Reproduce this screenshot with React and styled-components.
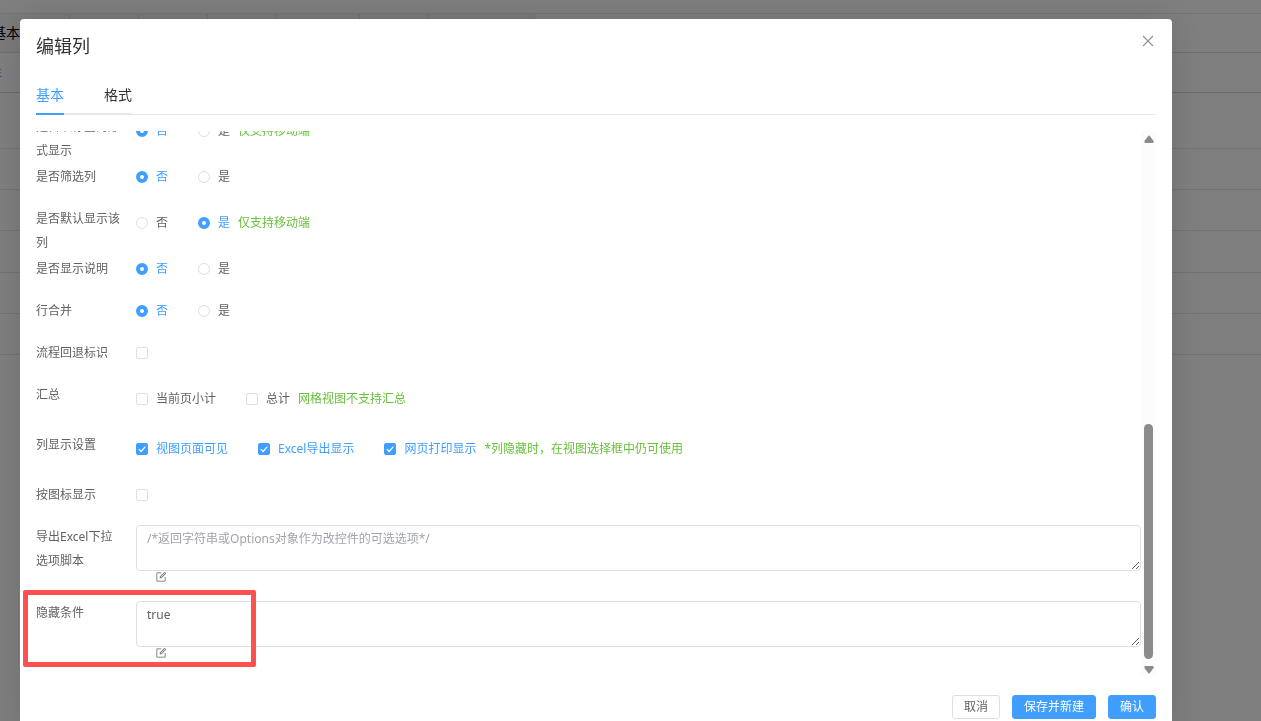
import React from "react";
import styled, { createGlobalStyle, css } from "styled-components";

const pageColumns = [78, 69, 69, 69, 83, 69, 106];
const pageRows = [40, 56, 41, 41, 42, 41, 41];

const App = () => {
  return (
    <>
      <GlobalStyle />
      <Page aria-hidden='true'>
        <PageBar />
        <PageHead>
          {pageColumns.map((width, index) => (
            <PageHeadCell key={index} $width={width}>
              {index === 0 ? "基本" : null}
            </PageHeadCell>
          ))}
        </PageHead>
        {pageRows.map((height, index) => (
          <PageRow key={index} $height={height} $strong={index === 0}>
            {index === 0 ? <PageLink>主</PageLink> : null}
          </PageRow>
        ))}
      </Page>
      <Overlay>
        <Dialog role='dialog' aria-labelledby='dialog-title'>
          <Header>
            <Title id='dialog-title'>编辑列</Title>
            <CloseButton type='button' aria-label='关闭'>
              <svg width='12' height='12' viewBox='0 0 12 12'>
                <path
                  d='M1 1L11 11M11 1L1 11'
                  stroke='#909399'
                  strokeWidth='1.2'
                  fill='none'
                />
              </svg>
            </CloseButton>
          </Header>
          <Tabs role='tablist'>
            <TabList>
              <Tab type='button' role='tab' aria-selected='true' $active>
                基本
              </Tab>
              <Tab type='button' role='tab' aria-selected='false'>
                格式
              </Tab>
            </TabList>
          </Tabs>
          <Body>
            <Form>
              <RadioRow
                label='是否以标签的形式显示'
                name='tag'
                value='否'
                hint='仅支持移动端'
              />
              <RadioRow label='是否筛选列' name='filter' value='否' />
              <RadioRow
                label='是否默认显示该列'
                name='visible'
                value='是'
                hint='仅支持移动端'
              />
              <RadioRow label='是否显示说明' name='description' value='否' />
              <RadioRow label='行合并' name='merge' value='否' />
              <CheckRow label='流程回退标识' options={[{ text: "" }]} />
              <CheckRow
                label='汇总'
                options={[{ text: "当前页小计" }, { text: "总计" }]}
                hint='网格视图不支持汇总'
              />
              <CheckRow
                label='列显示设置'
                options={[
                  { text: "视图页面可见", checked: true },
                  { text: "Excel导出显示", checked: true },
                  { text: "网页打印显示", checked: true },
                ]}
                hint='*列隐藏时，在视图选择框中仍可使用'
              />
              <CheckRow label='按图标显示' options={[{ text: "" }]} />
              <ScriptRow
                id='export-script'
                label='导出Excel下拉选项脚本'
                placeholder='/*返回字符串或Options对象作为改控件的可选选项*/'
              />
              <ScriptRow
                id='hide-condition'
                label='隐藏条件'
                value='true'
                marked
              />
            </Form>
            <Scrollbar aria-hidden='true'>
              <Arrow viewBox='0 0 10 8'>
                <path d='M4 1.2Q5 0 6 1.2L9.6 6Q10 8 8.6 8H1.4Q0 8 .4 6Z' />
              </Arrow>
              <Track>
                <Thumb />
              </Track>
              <Arrow viewBox='0 0 10 8'>
                <path d='M4 6.8Q5 8 6 6.8L9.6 2Q10 0 8.6 0H1.4Q0 0 .4 2Z' />
              </Arrow>
            </Scrollbar>
          </Body>
          <Footer>
            <Button type='button'>取消</Button>
            <Button type='button' $primary>
              保存并新建
            </Button>
            <Button type='button' $primary>
              确认
            </Button>
          </Footer>
        </Dialog>
      </Overlay>
    </>
  );
};

const RadioRow = ({ label, name, value, hint }) => (
  <Row role='radiogroup' aria-label={label}>
    <Label as='span'>{label}</Label>
    <Controls $tall={Boolean(hint)}>
      <Options>
        {["否", "是"].map((text) => (
          <Option key={text}>
            <Radio type='radio' name={name} defaultChecked={text === value} />
            <span>{text}</span>
          </Option>
        ))}
      </Options>
      {hint ? <Hint>{hint}</Hint> : null}
    </Controls>
  </Row>
);

const CheckRow = ({ label, options, hint }) => (
  <Row role='group' aria-label={label}>
    <Label as='span'>{label}</Label>
    <Controls $tall={Boolean(hint)}>
      <Options>
        {options.map(({ text, checked }) => (
          <Option key={text}>
            <CheckHolder>
              <Checkbox
                type='checkbox'
                defaultChecked={checked}
                aria-label={text || label}
              />
              <Tick viewBox='0 0 12 12'>
                <path d='M2.8 6.2L5.1 8.5L9.4 3.6' />
              </Tick>
            </CheckHolder>
            {text ? <span>{text}</span> : null}
          </Option>
        ))}
      </Options>
      {hint ? <Hint>{hint}</Hint> : null}
    </Controls>
  </Row>
);

const ScriptRow = ({ id, label, value, placeholder, marked }) => (
  <Row>
    <Label htmlFor={id}>{label}</Label>
    <ScriptField>
      <TextArea id={id} defaultValue={value} placeholder={placeholder} />
      <EditButton type='button' aria-label='编辑'>
        <svg width='12' height='12' viewBox='0 0 1024 1024' fill='#606266'>
          <path d='M832 512a32 32 0 1 1 64 0v352a32 32 0 0 1-32 32H160a32 32 0 0 1-32-32V160a32 32 0 0 1 32-32h352a32 32 0 0 1 0 64H192v640h640V512z' />
          <path d='m469.952 554.24 52.8-7.552L847.104 222.4a32 32 0 1 0-45.248-45.248L477.44 501.44l-7.552 52.8zm422.4-422.4a96 96 0 0 1 0 135.808l-331.84 331.84a32 32 0 0 1-18.112 9.088L436.8 623.68a32 32 0 0 1-36.224-36.224l15.104-105.6a32 32 0 0 1 9.024-18.112l331.904-331.84a96 96 0 0 1 135.744 0z' />
        </svg>
      </EditButton>
    </ScriptField>
    {marked ? <Marker aria-hidden='true' /> : null}
  </Row>
);

export default App;

const GlobalStyle = createGlobalStyle`
  * {
    box-sizing: border-box;
  }

  body {
    margin: 0;
    overflow: hidden;
    background: #fff;
    color: #606266;
    font-family: "Noto Sans", "Noto Sans CJK SC", sans-serif;
    font-size: 12px;
  }

  button, input, textarea {
    margin: 0;
    font-family: inherit;
  }
`;

/* the table behind is scrolled a little to the right */
const Page = styled.div`
  min-height: 100vh;
  margin-left: -8px;
`;

const PageBar = styled.div`
  height: 14px;
  border-bottom: 1px solid #e8e8ea;
`;

const PageHead = styled.div`
  display: flex;
  height: 39px;
  border-bottom: 1px solid #e0e0ea;
`;

const PageHeadCell = styled.div`
  flex: 0 0 ${({ $width }) => $width}px;
  border-right: 1px solid #e0e0e4;
  background: #f6f6f8;
  color: #000;
  font-size: 14px;
  line-height: 38px;
`;

const PageRow = styled.div`
  height: ${({ $height }) => $height}px;
  border-bottom: 1px solid ${({ $strong }) => ($strong ? "#d4d4d8" : "#e6e6ee")};
`;

const PageLink = styled.span`
  color: #409eff;
  font-size: 10px;
  line-height: 38px;
`;

const Overlay = styled.div`
  position: fixed;
  inset: 0;
  overflow: hidden;
  padding: 19px 89px 0 20px;
  background: rgba(0, 0, 0, 0.5);
`;

const Dialog = styled.div`
  padding: 16px 16px 20px;
  border-radius: 4px;
  background: #fff;
  box-shadow: 0 0 36px rgba(0, 0, 0, 0.14);
`;

const Header = styled.div`
  display: flex;
  justify-content: space-between;
  align-items: flex-start;
  height: 40px;
`;

const Title = styled.h2`
  margin: 0;
  color: #303133;
  font-size: 18px;
  font-weight: 400;
  line-height: 22px;
`;

const CloseButton = styled.button`
  display: flex;
  padding: 0 2px;
  border: 0;
  background: none;
`;

const Tabs = styled.div`
  display: flex;
  box-shadow: inset 0 -1px #e4e7ed;
`;

const TabList = styled.div`
  display: flex;
  gap: 40px;
  box-shadow: inset 0 -2px #e4e7ed;
`;

const Tab = styled.button`
  height: 40px;
  padding: 2px 0 0;
  border: 0;
  border-bottom: 2px solid ${({ $active }) => ($active ? "#409eff" : "transparent")};
  background: none;
  color: ${({ $active }) => ($active ? "#409eff" : "#303133")};
  font-size: 14px;
  line-height: 36px;
`;

const Body = styled.div`
  display: flex;
  height: calc(100vh - 176px);
  margin: 16px 0 0 -16px;
`;

/* scrolled to the end, the first row is cut by the top edge */
const Form = styled.div`
  display: flex;
  flex: 1;
  flex-direction: column;
  justify-content: flex-end;
  padding-left: 16px;
  overflow: hidden;
`;

const Row = styled.div`
  position: relative;
  display: flex;
  flex-shrink: 0;
  align-items: flex-start;

  &:last-child {
    height: 75px;
  }
`;

const Label = styled.label`
  flex: 0 0 100px;
  height: 24px;
  padding-right: 12px;
  line-height: 24px;
`;

const Controls = styled.div`
  display: flex;
  align-items: center;
  gap: 8px;
  height: ${({ $tall }) => ($tall ? 32 : 24)}px;
  margin-bottom: 18px;
`;

const Options = styled.div`
  display: flex;
  gap: 30px;
`;

const Option = styled.label`
  display: flex;
  align-items: center;
  gap: 8px;
  line-height: 24px;

  &:has(input:checked) {
    color: #409eff;
  }
`;

const Hint = styled.span`
  color: #67c23a;
  line-height: 24px;
`;

const control = css`
  appearance: none;
  width: 12px;
  height: 12px;
  border: 1px solid #dcdfe6;
  background: #fff;
`;

const Radio = styled.input`
  ${control}
  border-radius: 50%;

  &:checked {
    border: 4px solid #409eff;
  }
`;

const CheckHolder = styled.span`
  display: grid;

  > * {
    grid-area: 1 / 1;
  }
`;

const Checkbox = styled.input`
  ${control}
  border-radius: 2px;

  &:checked {
    border-color: #409eff;
    background: #409eff;
  }
`;

const Tick = styled.svg`
  width: 12px;
  height: 12px;
  fill: none;
  stroke: #fff;
  stroke-width: 1.2;
  pointer-events: none;
`;

const ScriptField = styled.div`
  display: flex;
  flex: 1;
  flex-direction: column;
  height: 76px;
`;

const TextArea = styled.textarea`
  height: 46px;
  padding: 4px 10px;
  border: 1px solid #dcdfe6;
  border-radius: 4px;
  outline: none;
  background: #fff;
  color: #606266;
  font-size: 12px;
  line-height: 18px;
  resize: vertical;

  &::placeholder {
    color: #a0a4ac;
  }
`;

const EditButton = styled.button`
  display: flex;
  align-self: flex-start;
  margin-left: 19px;
  padding: 0;
  border: 0;
  background: none;
`;

const Marker = styled.div`
  position: absolute;
  top: -11px;
  left: -13px;
  width: 233px;
  height: 77px;
  border: 5px solid #ff5050;
  border-radius: 2px;
  pointer-events: none;
`;

const Scrollbar = styled.div`
  display: flex;
  flex: 0 0 15px;
  flex-direction: column;
  align-items: center;
  padding: 4px 0 2px;
  background: #fcfcfc;
`;

const Arrow = styled.svg`
  width: 10px;
  height: 8px;
  fill: #8b8b8b;
`;

const Track = styled.div`
  display: flex;
  flex: 1;
  align-items: flex-end;
  padding: 6px 0 7px;
`;

const Thumb = styled.div`
  width: 9px;
  height: 46%;
  border-radius: 5px;
  background: #8b8b8b;
`;

const Footer = styled.div`
  display: flex;
  justify-content: flex-end;
  gap: 12px;
  padding-top: 19px;
`;

const Button = styled.button`
  height: 24px;
  padding: 0 11px;
  border: 1px solid ${({ $primary }) => ($primary ? "#409eff" : "#dcdfe6")};
  border-radius: 3px;
  background: ${({ $primary }) => ($primary ? "#409eff" : "#fff")};
  color: ${({ $primary }) => ($primary ? "#fff" : "#606266")};
  font-size: 12px;
  line-height: 22px;
`;
